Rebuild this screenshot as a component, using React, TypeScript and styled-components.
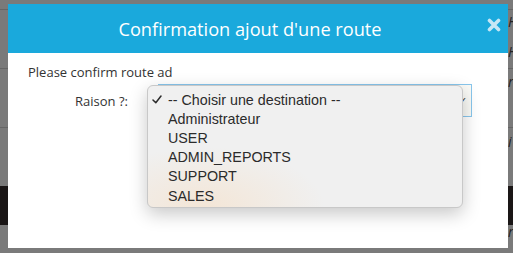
import styled, { createGlobalStyle } from "styled-components";

const Global = createGlobalStyle`
  html, body {
    margin: 0;
    padding: 0;
    width: 513px;
    height: 253px;
    overflow: hidden;
    background: #7a7a7a;
    font-family: "Open Sans", "Liberation Sans", sans-serif;
  }
`;

const options = [
  "Administrateur",
  "USER",
  "ADMIN_REPORTS",
  "SUPPORT",
  "SALES",
];

const rightMarks = ["H", "H", "r", "", "i", "", "", "r"];

const CheckIcon = () => (
  <svg width="10" height="9" viewBox="0 0 10 9">
    <path d="M1 5 L3.8 7.8 L9 1" fill="none" stroke="#2b2b2b" strokeWidth="1.5" strokeLinecap="round" strokeLinejoin="round" />
  </svg>
);

const CloseIcon = () => (
  <svg width="14" height="14" viewBox="0 0 14 14">
    <path d="M2.5 2.5 L11.5 11.5 M11.5 2.5 L2.5 11.5" stroke="#c6e7f5" strokeWidth="3.6" strokeLinecap="round" />
  </svg>
);

const App = () => {
  return (
    <>
      <Global />
      <Backdrop>
        <Rule $top={9} />
        <Rule $top={58} />
        <Rule $top={58} />
        <DarkBand />
        <Marks>
          {rightMarks.map((m, i) => (
            <Mark key={i}>{m}</Mark>
          ))}
        </Marks>
      </Backdrop>
      <Modal>
        <Header>
          <Title>Confirmation ajout d'une route</Title>
          <Close>
            <CloseIcon />
          </Close>
        </Header>
        <Body>
          <Intro>Please confirm route ad</Intro>
          <FieldRow>
            <Label>Raison ?:</Label>
            <SelectBox>
              <Chevron>✓</Chevron>
            </SelectBox>
          </FieldRow>
          <Popup>
            <Option>
              <Check>
                <CheckIcon />
              </Check>
              -- Choisir une destination --
            </Option>
            {options.map((o) => (
              <Option key={o}>
                <Check />
                {o}
              </Option>
            ))}
          </Popup>
        </Body>
      </Modal>
    </>
  );
};

export default App;

const Backdrop = styled.div`
  position: relative;
  width: 513px;
  height: 253px;
  display: flex;
  flex-direction: column;
`;

const Rule = styled.div<{ $top: number }>`
  margin-top: ${(p) => p.$top}px;
  height: 1px;
  background: #666;
`;

const DarkBand = styled.div`
  margin-top: 58px;
  height: 39px;
  background: #1a1616;
`;

const Marks = styled.div`
  position: absolute;
  right: 0;
  top: 12px;
  width: 5px;
  display: flex;
  flex-direction: column;
  gap: 8px;
  overflow: hidden;
`;

const Mark = styled.div`
  height: 22px;
  font-style: italic;
  font-size: 14px;
  color: #222;
`;

const Modal = styled.div`
  position: fixed;
  left: 8px;
  top: 4px;
  width: 500px;
  height: 244px;
  background: #ffffff;
  display: flex;
  flex-direction: column;
`;

const Header = styled.div`
  position: relative;
  height: 49px;
  background: #1aa9dc;
  display: flex;
  align-items: center;
  justify-content: center;
`;

const Title = styled.div`
  color: #ffffff;
  font-size: 18.2px;
  font-family: "Open Sans", sans-serif;
  margin-left: -16px;
`;

const Close = styled.div`
  position: absolute;
  right: 7px;
  top: 14px;
  display: flex;
`;

const Body = styled.div`
  position: relative;
  flex: 1;
  padding: 10px 0 0 20px;
`;

const Intro = styled.div`
  font-size: 13px;
  color: #333;
  line-height: 18px;
`;

const FieldRow = styled.div`
  display: flex;
  align-items: center;
  margin-top: 3px;
`;

const Label = styled.div`
  width: 100px;
  text-align: right;
  font-size: 13px;
  color: #333;
`;

const SelectBox = styled.div`
  margin-left: 30px;
  width: 314px;
  height: 33px;
  border: 1px solid #88c6ec;
  background: #fafaf6;
  display: flex;
  align-items: center;
  justify-content: flex-end;
  box-sizing: border-box;
`;

const Chevron = styled.span`
  font-size: 11px;
  color: #333;
  margin-right: 4px;
`;

const Popup = styled.div`
  position: absolute;
  left: 139px;
  top: 32px;
  width: 316px;
  height: 123px;
  box-sizing: border-box;
  padding-top: 4px;
  border-radius: 6px;
  border: 1px solid #c8c8c8;
  background: radial-gradient(
      ellipse 120px 60px at 18% 100%,
      rgba(244, 228, 210, 0.85),
      rgba(240, 240, 240, 0) 100%
    ),
    #f0f0f0;
  box-shadow: 0 6px 18px rgba(0, 0, 0, 0.22);
  font-family: "Liberation Sans", Arial, sans-serif;
`;

const Option = styled.div`
  display: flex;
  align-items: center;
  height: 19.2px;
  font-size: 14.3px;
  color: #2b2b2b;
`;

const Check = styled.span`
  width: 20px;
  padding-left: 4px;
  box-sizing: border-box;
  display: flex;
  align-items: center;
`;
